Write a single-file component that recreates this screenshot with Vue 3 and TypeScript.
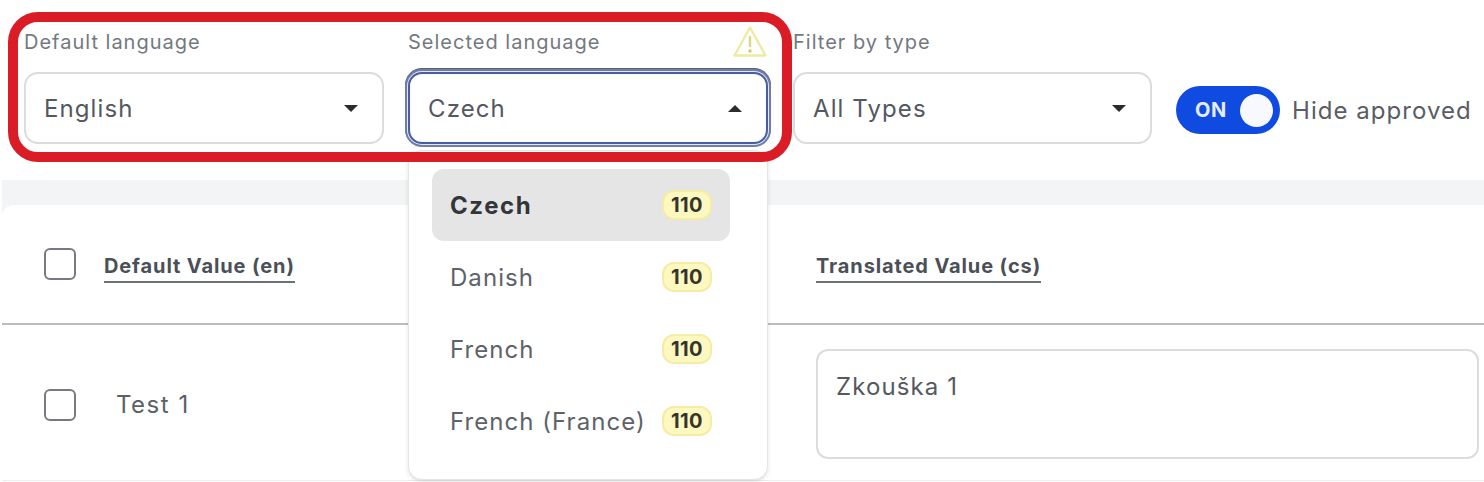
<script setup lang="ts">
const languages = [
  { name: 'Czech', count: 110, active: true },
  { name: 'Danish', count: 110, active: false },
  { name: 'French', count: 110, active: false },
  { name: 'French (France)', count: 110, active: false }
];
</script>

<template>
  <div class="page">
    <div class="filters">
      <div class="field">
        <label>Default language</label>
        <div class="select">
          <span>English</span>
          <i class="caret"></i>
        </div>
      </div>
      <div class="field">
        <label>Selected language</label>
        <svg class="warn" width="34" height="34" viewBox="0 0 34 34" fill="none">
          <path d="M17 2.5 L32.5 30.5 H1.5 Z" stroke="#eeeaa2" stroke-width="2.4" stroke-linejoin="round" />
          <path d="M17 12 V21" stroke="#dcd583" stroke-width="2.4" stroke-linecap="round" />
          <circle cx="17" cy="26" r="1.7" fill="#d3ca6c" />
        </svg>
        <div class="select open">
          <span>Czech</span>
          <i class="caret up"></i>
        </div>
        <div class="menu">
          <div v-for="lang in languages" :key="lang.name" class="option" :class="{ active: lang.active }">
            <span>{{ lang.name }}</span>
            <b class="badge">{{ lang.count }}</b>
          </div>
        </div>
      </div>
      <div class="field type">
        <label>Filter by type</label>
        <div class="select">
          <span>All Types</span>
          <i class="caret"></i>
        </div>
      </div>
      <div class="toggle-wrap">
        <div class="toggle">
          <span>ON</span>
          <i class="knob"></i>
        </div>
        <span class="toggle-label">Hide approved</span>
      </div>
      <div class="highlight"></div>
    </div>

    <div class="table">
      <div class="row head">
        <span class="check"></span>
        <span class="th">Default Value (en)</span>
        <span class="th">Translated Value (cs)</span>
      </div>
      <div class="row body">
        <span class="check"></span>
        <span class="cell">Test 1</span>
        <div class="textarea">Zkouška 1</div>
      </div>
    </div>
  </div>
</template>

<style>
html,
body {
  margin: 0;
  background: #fff;
  overflow: hidden;
}
</style>

<style scoped>
.page {
  width: 1484px;
  height: 482px;
  overflow: hidden;
  font-family: Inter, 'Liberation Sans', sans-serif;
  color: #4b4f57;
  box-sizing: border-box;
}

.filters {
  position: relative;
  display: flex;
  gap: 24px;
  padding: 30px 0 0 24px;
  height: 180px;
  box-sizing: border-box;
}

.field {
  position: relative;
  width: 360px;
}

.type {
  width: 359px;
  margin-left: 1px;
}

label {
  display: block;
  height: 42px;
  font-size: 20px;
  line-height: 25px;
  letter-spacing: 1px;
  color: #74787f;
}

.warn {
  position: absolute;
  right: 1px;
  top: -5px;
}

.select {
  display: flex;
  align-items: center;
  justify-content: space-between;
  box-sizing: border-box;
  height: 72px;
  padding: 0 24px 0 18px;
  border: 2px solid #dcdcdc;
  border-radius: 14px;
  background: #fff;
  font-size: 24px;
  letter-spacing: 1.1px;
  color: #54585f;
}

.select.open {
  border-color: #4a5da0;
  background: #fff;
  box-shadow: 0 0 0 1px #e4e8f4, 0 0 0 3px #6f7dab, 0 -1px 0 3px #5c6272, inset 0 0 3px #e6f2ff;
}

.caret {
  width: 0;
  height: 0;
  border-left: 7px solid transparent;
  border-right: 7px solid transparent;
  border-top: 7px solid #2a2c30;
}

.caret.up {
  border-top: 0;
  border-bottom: 7px solid #2a2c30;
}

.menu {
  position: absolute;
  z-index: 2;
  left: 0;
  right: 0;
  top: 120px;
  height: 330px;
  box-sizing: border-box;
  padding: 18px 37px 0 23px;
  background: #fff;
  border: 1px solid #e4e5e7;
  border-radius: 14px;
  box-shadow: 0 2px 4px rgba(0, 0, 0, 0.12);
}

.option {
  display: flex;
  align-items: center;
  justify-content: space-between;
  height: 72px;
  padding: 0 18px;
  border-radius: 12px;
  font-size: 24px;
  letter-spacing: 1.05px;
  color: #5e6269;
}

.option.active {
  background: #e5e5e6;
  color: #33353b;
  font-weight: 700;
  letter-spacing: 1.6px;
}

.badge {
  width: 50px;
  height: 30px;
  line-height: 27px;
  text-align: center;
  box-sizing: border-box;
  border: 2px solid #f5eca6;
  border-radius: 12px;
  background: #fdf8c0;
  font-size: 20px;
  font-weight: 700;
  letter-spacing: 0.5px;
  color: #35352c;
}

.toggle-wrap {
  display: flex;
  align-items: center;
  gap: 12px;
  margin-top: 56px;
  height: 48px;
}

.toggle {
  display: flex;
  align-items: center;
  justify-content: space-between;
  box-sizing: border-box;
  width: 104px;
  height: 48px;
  padding: 0 7px 0 19px;
  border-radius: 24px;
  background: #0f4be0;
  color: #e6ebfb;
  font-size: 20px;
  font-weight: 700;
  letter-spacing: 0.5px;
}

.knob {
  width: 33px;
  height: 33px;
  border-radius: 50%;
  background: #f8f9fe;
}

.toggle-label {
  padding-top: 1px;
  font-size: 24px;
  letter-spacing: 1.05px;
  color: #595d64;
  white-space: nowrap;
}

.highlight {
  position: absolute;
  z-index: 3;
  left: 8px;
  top: 12px;
  width: 784px;
  height: 150px;
  box-sizing: border-box;
  border: 10px solid #da1c26;
  border-radius: 30px;
  pointer-events: none;
}

.table {
  margin-left: 2px;
  padding-top: 25px;
  background: #f3f4f5;
}

.row {
  display: grid;
  grid-template-columns: 32px 684px 663px;
  column-gap: 28px;
  padding-left: 42px;
  background: #fff;
}

.head {
  height: 120px;
  align-items: center;
  border-bottom: 2px solid #bdbdbd;
  border-top-left-radius: 12px;
  box-sizing: border-box;
}

.body {
  height: 156px;
  border-bottom: 1px solid #eeeeee;
  box-sizing: border-box;
  padding-top: 24px;
}

.check {
  width: 32px;
  height: 32px;
  box-sizing: border-box;
  border: 2px solid #777a80;
  border-radius: 6px;
  background: #fff;
}

.body .check {
  margin-top: 40px;
}

.th {
  justify-self: start;
  margin-top: 7px;
  font-size: 20px;
  font-weight: 700;
  line-height: 29px;
  letter-spacing: 0.88px;
  color: #4b4f57;
  border-bottom: 2px solid #6c7077;
}

.cell {
  margin: 40px 0 0 12px;
  font-size: 24px;
  line-height: 32px;
  letter-spacing: 1.5px;
  color: #5c6067;
}

.textarea {
  box-sizing: border-box;
  height: 110px;
  padding: 20px 18px;
  border: 2px solid #dcdcdc;
  border-radius: 12px;
  font-size: 24px;
  line-height: 32px;
  letter-spacing: 1.1px;
  color: #55595f;
}
</style>
